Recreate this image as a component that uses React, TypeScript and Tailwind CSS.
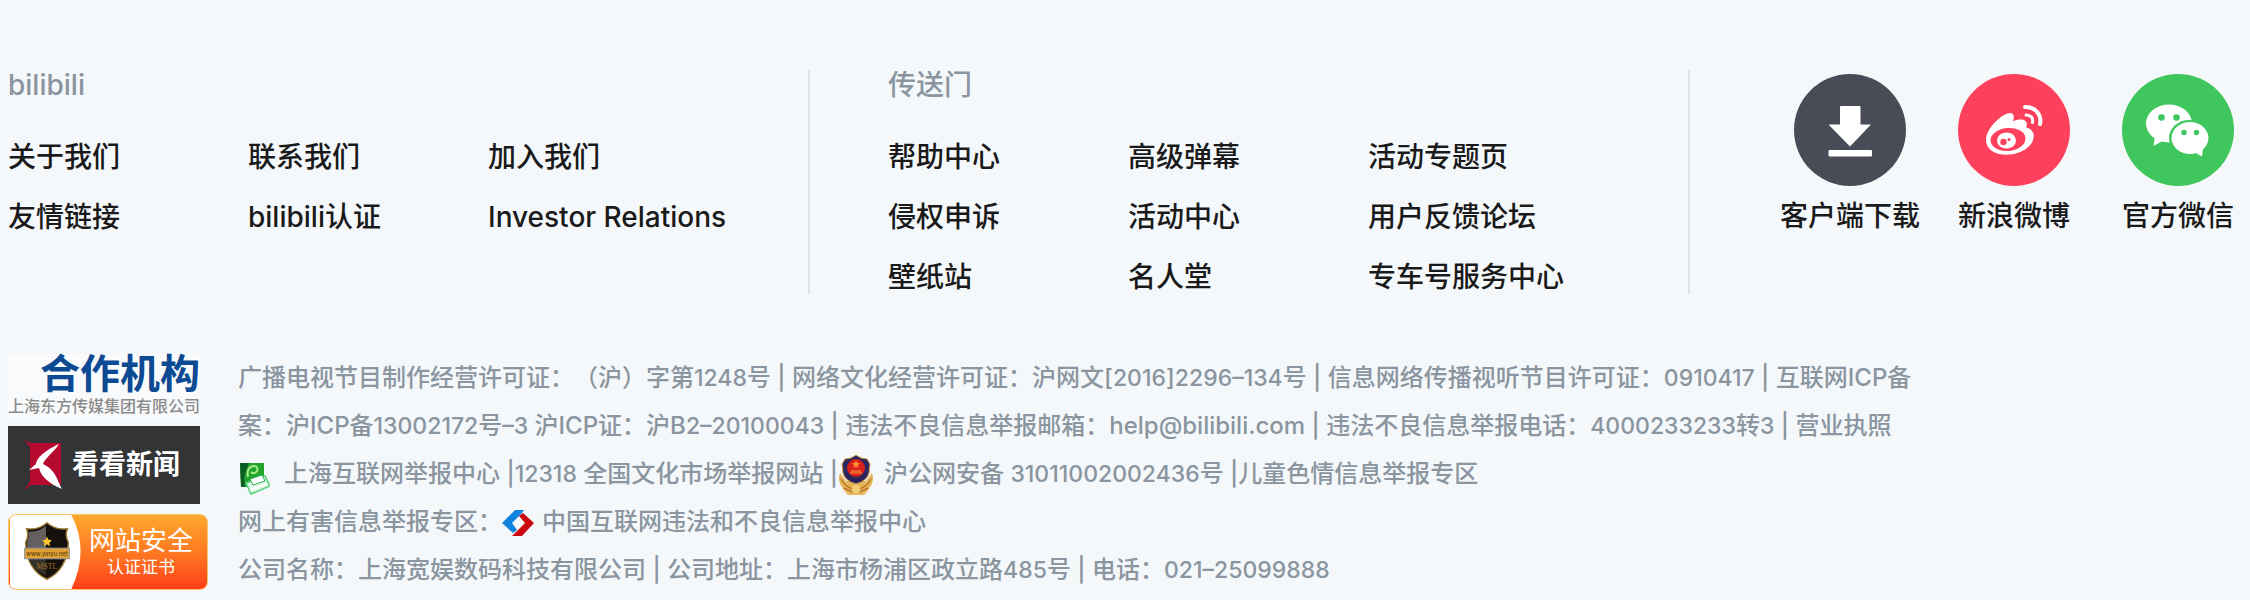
import React from "react";

const aboutLinks = ["关于我们", "联系我们", "加入我们", "友情链接", "bilibili认证", "Investor Relations"];
const portalLinks = [
  "帮助中心", "高级弹幕", "活动专题页",
  "侵权申诉", "活动中心", "用户反馈论坛",
  "壁纸站", "名人堂", "专车号服务中心",
];

function LinkGroup({ title, links }: { title: string; links: string[] }) {
  return (
    <section>
      <h2 className="text-[28px] leading-[30px] text-[#8a959f]">{title}</h2>
      <ul className="mt-[27px] grid grid-cols-[240px_240px_auto] text-[28px] leading-[60px] text-[#1a1a1a]">
        {links.map((l) => (
          <li key={l}>
            <a href="#" className="whitespace-nowrap">{l}</a>
          </li>
        ))}
      </ul>
    </section>
  );
}

function DownloadIcon() {
  return (
    <svg viewBox="0 0 112 112" className="size-28" aria-hidden="true">
      <circle cx="56" cy="56" r="56" fill="#484c57" />
      <path d="M47 32h18.500q1 0 1 1v17.500H77L56 72.500 34.500 50.500h11.500V33q0-1 1-1z" fill="#fff" />
      <rect x="34.500" y="76" width="43.500" height="6.500" rx="1" fill="#fff" />
    </svg>
  );
}

function WeiboIcon() {
  return (
    <svg viewBox="0 0 112 112" className="size-28" aria-hidden="true">
      <circle cx="56" cy="56" r="56" fill="#fd415c" />
      <path d="M54 39.500c2.500 1.500 2 5 1 7.500 5-2 11-2.500 13 .5 1.200 2 .8 4 .3 6 5 1.500 8 4.500 7.300 10C74.500 73 62 80.700 49 80.700S28 75 28 66c0-13 20-30 26-26.500z" fill="#fff" />
      <ellipse cx="50" cy="65.500" rx="17.500" ry="11.500" transform="rotate(-5 50 65.500)" fill="#fd415c" />
      <ellipse cx="48.500" cy="66.500" rx="9.500" ry="8" fill="#fff" />
      <circle cx="45.500" cy="68" r="3.200" fill="#fd415c" />
      <circle cx="51" cy="65.500" r="1.500" fill="#fd415c" />
      <g fill="none" stroke="#fff" strokeLinecap="round">
        <path d="M67 33c10-.5 17 7.500 15 17" strokeWidth="4" />
        <path d="M68 41c5 0 7.500 3 6.500 7.500" strokeWidth="3" />
      </g>
    </svg>
  );
}

function WechatIcon() {
  return (
    <svg viewBox="0 0 112 112" className="size-28" aria-hidden="true">
      <circle cx="56" cy="56" r="56" fill="#3fc65c" />
      <ellipse cx="47" cy="49.500" rx="23" ry="19" fill="#fff" />
      <path d="M33 62l-1.500 10 9-5z" fill="#fff" />
      <ellipse cx="67.500" cy="64" rx="20.500" ry="18" fill="#3fc65c" />
      <ellipse cx="68" cy="64" rx="18.500" ry="16" fill="#fff" />
      <path d="M81 74l-1 8.500-8-4.500z" fill="#fff" />
      <g fill="#3fc65c">
        <circle cx="39.500" cy="43.500" r="3.300" />
        <circle cx="54.500" cy="43.500" r="3.300" />
        <circle cx="62" cy="58.500" r="2.700" />
        <circle cx="74.500" cy="58.500" r="2.700" />
      </g>
    </svg>
  );
}

const channels = [
  { label: "客户端下载", icon: <DownloadIcon /> },
  { label: "新浪微博", icon: <WeiboIcon /> },
  { label: "官方微信", icon: <WechatIcon /> },
];

function PartnerCard() {
  return (
    <a href="#" className="block w-48">
      <span className="block bg-[#f9fafb] text-right">
        <span className="block text-[40px] font-bold leading-10 text-[#0d4a94]">合作机构</span>
        <span className="block text-center text-base leading-6 text-[#8b8b8b]">上海东方传媒集团有限公司</span>
      </span>
      <span className="mt-2 flex h-[78px] items-center bg-[#333436] pl-4">
        <svg viewBox="0 0 40 52" className="h-[52px] w-10" aria-hidden="true">
          <path d="M0 1l6 3h31v42H7l-7 5 6-8V8z" fill="#b5092f" />
          <path d="M35 5C26 9 13 17 12 25l-7 6 10-2c2 9 11 16 23 21-5-9-6-19-19-25 2-6 11-12 16-20z" fill="#fff" />
        </svg>
        <span className="ml-2 text-[27px] font-bold text-white">看看新闻</span>
      </span>
    </a>
  );
}

function SecurityBadge() {
  return (
    <a href="#" className="relative block h-[76px] w-[200px] overflow-hidden rounded-lg border border-[#fdc470] bg-linear-to-b from-[#fda82c] to-[#ff3a19]">
      <svg viewBox="0 0 74 76" className="absolute left-0 top-0 h-full w-[74px]" aria-hidden="true">
        <path d="M0 0h63q19 36 0 76H0z" fill="#fff" />
        <path d="M38 8q9 8 21 6-3 7 1 14-1 28-22 38-21-10-22-38 4-7 1-14 12 2 21-6z" fill="#14110d" stroke="#9c7a33" strokeWidth="1.500" />
        <path d="M37 11v23H18q-1-4 0-7 2-5 1-10 10 1 18-6z" fill="#63605f" />
        <path d="M19 45h18v17Q23 56 19 45z" fill="#35312c" />
        <rect x="15" y="34" width="46" height="11" fill="#e0a233" stroke="#8d93a6" strokeWidth="1" />
        <path d="M38 22l1.500 3.500 3.500.5-2.500 2.500.5 3.500-3-2-3 2 .5-3.500L33 26l3.500-.5z" fill="#ffc830" />
        <text x="38" y="42" textAnchor="middle" fontSize="6" fill="#5a3b10">www.yinyu.net</text>
        <text x="38" y="55" textAnchor="middle" fontSize="8" fontFamily="Liberation Serif, serif" fill="#a8791f">MSTL</text>
      </svg>
      <span className="flex flex-col items-center pl-[66px] text-white">
        <span className="mt-2.5 text-[26px] font-normal leading-8">网站安全</span>
        <span className="text-[17px] font-normal leading-5">认证证书</span>
      </span>
    </a>
  );
}

function ReportIcon() {
  return (
    <svg viewBox="0 0 30 40" className="ml-0.5 mr-3.5 inline-block h-10 w-[30px]" aria-hidden="true">
      <path d="M0 8h24v14l-3 10H1z" fill="#23a52c" />
      <path d="M0 8h9L4 22l1 10H1z" fill="#0d5c24" />
      <path d="M8 22q-2-9 5-11 6 0 4 5-3 4-6 1" fill="none" stroke="#a8ec8c" strokeWidth="2" />
      <path d="M6 28l19-7 5 10-19 8z" fill="#dcf8e4" stroke="#53cf78" strokeWidth="1.500" />
      <path d="M10 24l12-4 3 6-12 4z" fill="#fff" stroke="#2fae52" strokeWidth="1" />
      <path d="M10 35l17-6" stroke="#fff" strokeWidth="2" />
    </svg>
  );
}

function PoliceIcon() {
  return (
    <svg viewBox="0 0 36 40" className="mr-2.5 inline-block h-10 w-9" aria-hidden="true">
      <path d="M2 18q-3 8 3 16l5 6h16l5-6q6-8 3-16l-6 8H8z" fill="#e6b45a" />
      <path d="M3 24q5 9 13 10M33 24q-5 9-13 10M6 33l8 4M30 33l-8 4" fill="none" stroke="#b67a25" strokeWidth="1.500" />
      <path d="M18 0l5 3 6 1 3 5-1 9q-2 8-13 11Q7 26 5 18L4 9l3-5 6-1z" fill="#2b2660" stroke="#cf9a3d" strokeWidth="1" />
      <circle cx="18" cy="13" r="9" fill="#d9211b" />
      <path d="M18 5l1.300 3H22l-2 2 .7 3-2.700-1.500L15.300 13l.7-3-2-2h2.700z" fill="#ff8a35" />
      <path d="M12 18h12M13 16h10" stroke="#f4a23a" strokeWidth="1.200" />
      <circle cx="18" cy="34" r="4" fill="#f3cf75" />
    </svg>
  );
}

function ChinaReportIcon() {
  return (
    <svg viewBox="0 0 32 26" className="mr-2 inline-block h-[26px] w-8" aria-hidden="true">
      <path d="M13 0h9l-3 4-9 9 5 7-4 3L0 13z" fill="#0f83dd" />
      <path d="M21 3l11 10-12 13H10l4-4 9-9-6-7z" fill="#cb0710" />
    </svg>
  );
}

// Figures are set a touch smaller than the Chinese text around them.
function Note({ text }: { text: string }) {
  return (
    <>
      {text.split(/([\d–]+)/).map((part, i) =>
        i % 2 ? <span key={i} className="text-[23px]">{part}</span> : part
      )}
    </>
  );
}

export default function App() {
  return (
    <footer className="min-h-screen bg-[#f4f8fb] pt-[70px] pl-2 font-['Inter','Noto_Sans_CJK_SC',sans-serif] font-medium [text-spacing-trim:space-all]">
      <div className="flex h-56">
        <div className="w-[802px] border-r-2 border-[#dfe4ec]">
          <LinkGroup title="bilibili" links={aboutLinks} />
        </div>
        <div className="w-[880px] border-r-2 border-[#dfe4ec] pl-[78px]">
          <LinkGroup title="传送门" links={portalLinks} />
        </div>
        <ul className="ml-auto mr-0.5 flex gap-6 pt-1">
          {channels.map((c) => (
            <li key={c.label} className="w-[140px]">
              <a href="#" className="flex flex-col items-center text-[28px] leading-[60px] text-[#1a1a1a]">
                {c.icon}
                <span>{c.label}</span>
              </a>
            </li>
          ))}
        </ul>
      </div>
      <div className="mt-[60px] flex gap-[30px]">
        <div className="flex flex-col gap-2.5">
          <PartnerCard />
          <SecurityBadge />
        </div>
        <div className="text-2xl leading-[48px] text-[#8a959f]">
          <p><Note text="广播电视节目制作经营许可证：（沪）字第1248号 | 网络文化经营许可证：沪网文[2016]2296–134号 | 信息网络传播视听节目许可证：0910417 | 互联网ICP备" /></p>
          <p><Note text="案：沪ICP备13002172号–3 沪ICP证：沪B2–20100043 | 违法不良信息举报邮箱：help@bilibili.com | 违法不良信息举报电话：4000233233转3 | 营业执照" /></p>
          <p><ReportIcon /><Note text="上海互联网举报中心 |12318 全国文化市场举报网站 |" /><PoliceIcon /><Note text="沪公网安备 31011002002436号 |儿童色情信息举报专区" /></p>
          <p>网上有害信息举报专区：<ChinaReportIcon />中国互联网违法和不良信息举报中心</p>
          <p><Note text="公司名称：上海宽娱数码科技有限公司 | 公司地址：上海市杨浦区政立路485号 | 电话：021–25099888" /></p>
        </div>
      </div>
    </footer>
  );
}
